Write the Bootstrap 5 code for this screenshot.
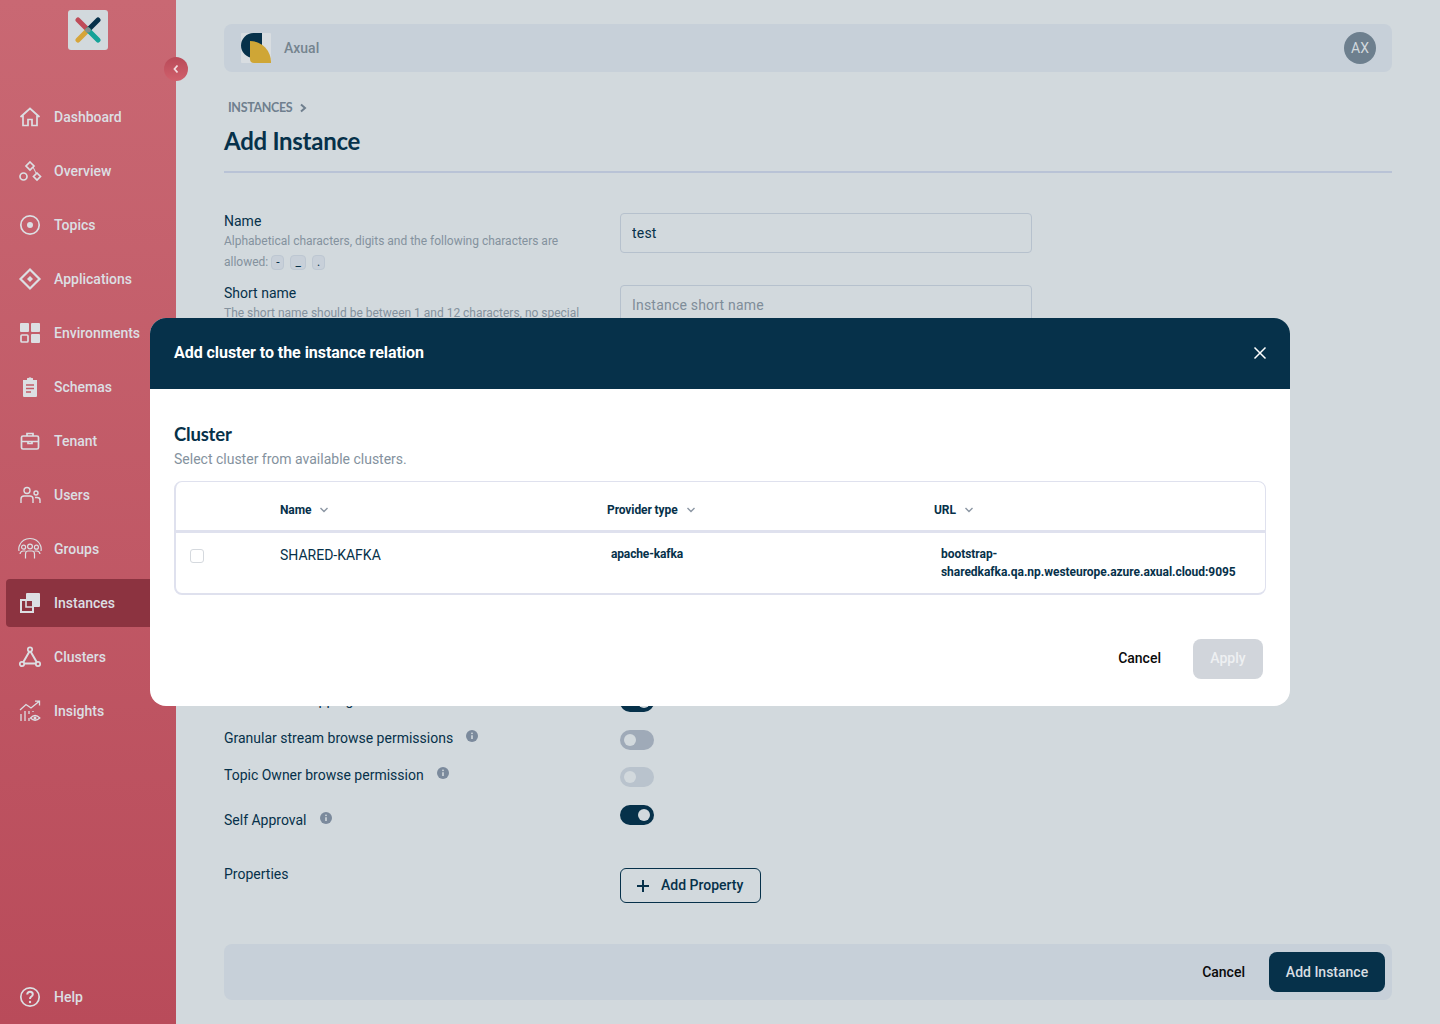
<!DOCTYPE html>
<html lang="en">
<head>
  <meta charset="UTF-8">
  <meta name="viewport" content="width=device-width, initial-scale=1.0">
  <title>Add Instance</title>
  <link href="https://cdn.jsdelivr.net/npm/bootstrap@5.3.0/dist/css/bootstrap.min.css" rel="stylesheet">
  <style>
    html, body { height: 1024px; overflow: hidden; }
    body { background: #d2d9dd; font-family: Roboto, "Liberation Sans", sans-serif; color: #06314a; }
    .app-shell { height: 1024px; position: relative; overflow: hidden; }

    /* sidebar */
    .side-bar { width: 176px; height: 1024px; flex: none; position: relative; background: linear-gradient(180deg, #c96873 0%, #b94b5a 100%); padding-top: 10px; }
    .logo-box { width: 40px; height: 40px; background: #d2d9dd; border-radius: 3px; margin: 0 auto 43px 68px; }
    .collapse-btn { position: absolute; left: 164px; top: 57px; width: 24px; height: 24px; border-radius: 50%; background: linear-gradient(180deg, #b94a58, #d0606c); }
    .side-item { height: 48px; margin: 0 0 6px 6px; padding-left: 48px; color: #dcdfe3; font-size: 14px; font-weight: 500; position: relative; border-radius: 4px 0 0 4px; }
    .side-item svg { position: absolute; left: 12px; top: 12px; width: 24px; height: 24px; fill: none; stroke: #dcdfe3; stroke-width: 1.7; }
    .side-item.active-item { background: #8c3340; }
    .side-help { position: absolute; left: 0; right: 0; top: 973px; margin-bottom: 0; }

    /* main */
    .main-pane { flex: 1; padding: 24px 48px 0; min-width: 0; }
    .top-bar { height: 48px; background: #c7d0d9; border-radius: 8px; padding: 0 16px; }
    .org-logo { width: 32px; height: 32px; }
    .org-name { color: #75848f; font-size: 14px; font-weight: 500; margin-left: 12px; }
    .avatar { width: 32px; height: 32px; border-radius: 50%; background: #6d7f8e; color: #d2d9dd; font-size: 14px; font-weight: 400; }
    .crumb { font-family: Lato, sans-serif; font-size: 12.5px; font-weight: 700; color: #6f7f8e; margin: 27px 0 0 4px; height: 18px; line-height: 18px; letter-spacing: -.35px; }
    .crumb svg { margin-left: 6px; vertical-align: -1px; }
    .page-title { font-family: Lato, sans-serif; font-size: 24px; font-weight: 700; margin: 6px 0 0; line-height: 36px; height: 38px; letter-spacing: -.27px; color: #06314a; }
    .title-rule { height: 2px; background: #b9c3d6; margin: 10px 0 40px; }
    .form-line { display: flex; }
    .label-col { width: 396px; flex: none; padding-right: 28px; margin-top: -1px; }
    .field-label { font-size: 14px; line-height: 18px; color: #06314a; }
    .field-help { font-size: 12px; line-height: 21px; color: #84929e; margin-top: 1px; letter-spacing: -.01px; }
    .char-chip { display: inline-block; border: 1px solid #bdc7d2; background: #c8d0d9; border-radius: 4px; font-size: 12px; line-height: 13px; height: 15px; padding: 0 4px; margin: 0 6px 0 0; color: #06314a; vertical-align: 0; }
    .text-field { width: 412px; height: 40px; background: #d2d9dd; border: 1px solid #b6c1cd; border-radius: 4px; font-size: 14px; padding: 0 11px; color: #06314a; letter-spacing: .2px; }
    .text-field::placeholder { color: #7f8d99; opacity: 1; }
    .covered-block { height: 419px; padding-top: 12px; }
    .option-line { display: flex; font-size: 14px; height: 37px; }
    .option-first { height: 38px; }
    .option-self { height: 63px; }
    .option-self .label-col { padding-top: 7px; }
    .option-line .label-col { line-height: 18px; }
    .option-line .form-switch { padding: 0; margin: 0; min-height: 0; height: 20px; }
    .option-line .form-check-input { width: 34px; height: 20px; margin: 0; border: 0; float: none; display: block; background-color: #9faab8; background-size: 20px 20px; background-position: left center; background-image: url("data:image/svg+xml,%3csvg xmlns='http://www.w3.org/2000/svg' viewBox='-4 -4 8 8'%3e%3ccircle r='2.4' fill='%23d2d9dd'/%3e%3c/svg%3e"); opacity: 1; }
    .option-line .form-check-input:checked { background-color: #06314a; background-position: right center; }
    .option-line .form-check-input:disabled { background-color: #b9c3cd; opacity: 1; }
    .info-dot { display: inline-block; width: 12px; height: 12px; margin-left: 13px; vertical-align: 1px; }
    .prop-label { margin-top: -3px; }
    .add-prop { width: 141px; height: 35px; border: 1px solid #06314a; border-radius: 6px; background: transparent; color: #06314a; font-size: 14px; font-weight: 500; padding: 0 0 0 16px; }
    .plus-mark { margin-right: 12px; }
    .bottom-bar { height: 56px; background: #c7d0d9; border-radius: 8px; padding: 0 7px; margin-top: 41px; }
    .plain-btn { background: none; border: 0; padding: 0 0 2px; font-size: 14px; font-weight: 500; color: #0a0a0a; }
    .dark-btn { height: 40px; width: 116px; background: #06314a; color: #d8dee2; border: 0; border-radius: 8px; font-size: 14px; font-weight: 500; margin-left: 24px; padding: 0; }
    .bottom-bar .plain-btn { padding: 0; }

    /* dialog */
    .dialog-box { position: absolute; left: 150px; top: 318px; width: 1140px; height: 388px; background: #fff; border-radius: 16px; overflow: hidden; }
    .dialog-head { height: 71px; background: #06314a; color: #fff; padding: 0 22px 2px 24px; }
    .dialog-head h5 { font-family: Roboto, sans-serif; font-size: 16px; font-weight: 700; margin: 0; letter-spacing: -.05px; }
    .dialog-body { padding: 33px 24px 0; }
    .dialog-title { font-family: Lato, sans-serif; font-size: 18.5px; font-weight: 700; line-height: 24px; margin: 0; letter-spacing: -.2px; color: #06314a; }
    .dialog-sub { font-size: 14px; color: #84929e; line-height: 18px; margin: 4px 0 13px; }
    .cluster-box { border: 1px solid #dfe1ee; border-width: 1px 1px 2px 2px; border-radius: 8px; height: 114px; overflow: hidden; }
    .cluster-table { width: 1090px; table-layout: fixed; margin: 0; --bs-table-bg: transparent; color: #06314a; }
    .cluster-table th { height: 49px; border-bottom: 3px solid #dfe1ee; font-size: 12px; font-weight: 700; padding: 8px 0 0; vertical-align: middle; color: #06314a; letter-spacing: -.1px; }
    .cluster-table td { border: 0; padding: 0; vertical-align: top; font-size: 12px; font-weight: 700; line-height: 18px; color: #06314a; }
    .cluster-table .sort-mark { width: 10px; height: 6px; margin-left: 8px; vertical-align: 1px; }
    .cluster-table .name-cell { font-size: 14px; font-weight: 400; padding-top: 13px; }
    .cluster-table .type-cell { padding: 12px 0 0 4px; letter-spacing: -.15px; }
    .cluster-table .url-cell { padding: 12px 0 0 7px; letter-spacing: -.04px; }
    .pick-box { display: block; width: 14px; height: 14px; border: 1px solid #d5d9de; border-radius: 3px; margin: 16px 0 0 14px; }
    .dialog-foot { margin: 44px 3px 0 0; }
    .dialog-foot .plain-btn { margin-right: 1px; }
    .apply-btn { width: 70px; height: 40px; background: #d1d5db; color: #eef0f2; border: 0; border-radius: 8px; font-size: 14px; font-weight: 500; margin-left: 31px; padding: 0 0 2px; }
  </style>
</head>
<body>

<div class="app-shell d-flex">

  <!-- Sidebar -->
  <aside class="side-bar">
    <div class="logo-box d-flex align-items-center justify-content-center">
      <svg width="26" height="26" viewBox="0 0 26 26" fill="none" stroke-width="5" stroke-linecap="round">
        <path d="M3 3 L13 13" stroke="#bf4c59"/>
        <path d="M23 3 L13 13" stroke="#06314a"/>
        <path d="M3 23 L13 13" stroke="#d6a53a"/>
        <path d="M23 23 L13 13" stroke="#15a398"/>
        <circle cx="13" cy="13" r="2.6" fill="#84908f"/>
      </svg>
    </div>
    <div class="collapse-btn d-flex align-items-center justify-content-center">
      <svg width="8" height="10" viewBox="0 0 8 10" fill="none" stroke="#f2dde0" stroke-width="1.8"><path d="M5.5 1.5 L2.5 5 L5.5 8.5"/></svg>
    </div>

    <div class="side-item d-flex align-items-center"><svg viewBox="0 0 24 24"><path d="M2.5 12 L12 3.5 L21.5 12 M5 10.5 V20.5 H10 V14.5 H14 V20.5 H19 V10.5"/></svg>Dashboard</div>
    <div class="side-item d-flex align-items-center"><svg viewBox="0 0 24 24"><path d="M12 3 L16 7 L12 11 L8 7 Z M19 14 L22.5 17.5 L19 21 L15.5 17.5 Z"/><circle cx="5.5" cy="17.5" r="3.5"/><path d="M15 8 L18 14" stroke-width="1"/></svg>Overview</div>
    <div class="side-item d-flex align-items-center"><svg viewBox="0 0 24 24"><circle cx="12" cy="12" r="9.2"/><circle cx="12" cy="12" r="3" fill="#dcdfe3" stroke="none"/></svg>Topics</div>
    <div class="side-item d-flex align-items-center"><svg viewBox="0 0 24 24"><path stroke-width="2.2" d="M12 2.5 L21.5 12 L12 21.5 L2.5 12 Z"/><path d="M12 9 L15 12 L12 15 L9 12 Z" fill="#dcdfe3" stroke="none"/></svg>Applications</div>
    <div class="side-item d-flex align-items-center"><svg viewBox="0 0 24 24"><rect x="2" y="2" width="9" height="9" rx="1" fill="#dcdfe3" stroke="none"/><rect x="13" y="2" width="9" height="9" rx="1" fill="#dcdfe3" stroke="none"/><rect x="3" y="14" width="7" height="7" rx="1"/><rect x="13" y="13" width="9" height="9" rx="1" fill="#dcdfe3" stroke="none"/></svg>Environments</div>
    <div class="side-item d-flex align-items-center"><svg viewBox="0 0 24 24"><path fill="#dcdfe3" stroke="none" d="M5 5 H9 V3.5 Q9 3 9.5 3 H10.5 Q12 1.5 13.5 3 H14.5 Q15 3 15 3.5 V5 H19 V21 Q19 22 18 22 H6 Q5 22 5 21 Z"/><path stroke="#c25c68" stroke-width="1.5" d="M8 10 H16 M8 13.5 H16 M8 17 H13"/></svg>Schemas</div>
    <div class="side-item d-flex align-items-center"><svg viewBox="0 0 24 24"><rect x="3.5" y="7" width="17" height="13" rx="1.5"/><path d="M9 7 V4.5 H15 V7 M3.5 12.5 H20.5 M10 12.5 V14.5 H14 V12.5"/></svg>Tenant</div>
    <div class="side-item d-flex align-items-center"><svg viewBox="0 0 24 24"><g stroke-width="1.4"><circle cx="9" cy="7.5" r="3"/><path d="M3 20 V16 Q3 13 6 13 H12 Q15 13 15 16 V20"/><circle cx="18" cy="10" r="2"/><path d="M17 14.5 H19 Q22 14.5 22 17 V20"/></g></svg>Users</div>
    <div class="side-item d-flex align-items-center"><svg viewBox="0 0 24 24"><g stroke-width="1.2"><path d="M1 14 Q.4 11 1.5 8.5 Q4.5 1.5 12 1.5 Q19.5 1.5 22.5 8.5 Q23.6 11 23 14"/><circle cx="12" cy="9.5" r="2.4"/><circle cx="5.6" cy="10.2" r="2"/><circle cx="18.4" cy="10.2" r="2"/><path d="M7.5 21.5 V17 Q7.5 14 10 14 H14 Q16.5 14 16.5 17 V21.5 M2 17 Q2.5 14 5 14 H7.5 M22 17 Q21.5 14 19 14 H16.5"/></g></svg>Groups</div>
    <div class="side-item active-item d-flex align-items-center"><svg viewBox="0 0 24 24"><rect x="8" y="2" width="14" height="14" rx="1" fill="#dcdfe3" stroke="none"/><rect x="3" y="9" width="12" height="12" fill="#8c3340" stroke-width="2"/><path d="M8 9 V16 H15" stroke-width="1.6"/></svg>Instances</div>
    <div class="side-item d-flex align-items-center"><svg viewBox="0 0 24 24"><path d="M12 5.5 L4.5 18.5 H19.5 Z" stroke-width="2"/><circle cx="12" cy="4.5" r="2.2" fill="#c05866"/><circle cx="4" cy="19" r="2.2" fill="#c05866"/><circle cx="20" cy="19" r="2.2" fill="#c05866"/></svg>Clusters</div>
    <div class="side-item d-flex align-items-center"><svg viewBox="0 0 24 24"><g stroke-width="1.3"><path d="M2 11 L8 5.5 L13 9 L21 2.5 M17 2.2 H21.5 V6.5"/><path d="M3 22 V15 M7 22 V12 M11 22 V19 M11 12 V15 M15 12 V13"/><path d="M12.5 19 Q17 14 21.8 19 Q17 23.5 12.5 19 Z"/></g><circle cx="17" cy="19" r="1.5" fill="#dcdfe3" stroke="none"/></svg>Insights</div>

    <div class="side-item side-help d-flex align-items-center"><svg viewBox="0 0 24 24"><circle cx="12" cy="12" r="9.2"/><path d="M9.2 9.5 Q9.5 6.8 12 6.8 Q14.8 6.8 14.8 9.3 Q14.8 11 13 11.8 Q12 12.4 12 14" stroke-width="2"/><circle cx="12" cy="17" r="1.2" fill="#dcdfe3" stroke="none"/></svg>Help</div>
  </aside>

  <!-- Main page under the dialog -->
  <main class="main-pane">
    <div class="top-bar d-flex align-items-center">
      <svg class="org-logo" viewBox="0 0 32 32">
        <rect x="1" y="1" width="30" height="30" rx="1" fill="#d8dde1"/>
        <path d="M1 13.5 A12.5 12.5 0 0 1 13.5 1 H22 V26 H13.5 A12.5 12.5 0 0 1 1 13.5 Z" fill="#06314a"/>
        <path d="M10 9 A21 21 0 0 1 31 31 H14 Q10 31 10 27 Z" fill="#cfa636"/>
      </svg>
      <span class="org-name">Axual</span>
      <span class="avatar ms-auto d-flex align-items-center justify-content-center">AX</span>
    </div>

    <div class="crumb">INSTANCES<svg width="10" height="10" viewBox="0 0 8 10" fill="none" stroke="#6f7f8e" stroke-width="2"><path d="M2 1.5 L6 5 L2 8.5"/></svg></div>
    <h1 class="page-title">Add Instance</h1>
    <div class="title-rule"></div>

    <div class="form-line">
      <div class="label-col">
        <div class="field-label">Name</div>
        <div class="field-help"><span>Alphabetical characters, digits and the following characters are</span> <span>allowed:</span> <span class="char-chip">-</span><span class="char-chip">_</span><span class="char-chip">.</span></div>
      </div>
      <input class="text-field" type="text" value="test">
    </div>

    <div class="covered-block">
      <div class="form-line">
        <div class="label-col">
          <div class="field-label">Short name</div>
          <div class="field-help">The short name should be between 1 and 12 characters, no special</div>
        </div>
        <input class="text-field" type="text" placeholder="Instance short name">
      </div>
    </div>

    <div class="option-line option-first">
      <div class="label-col">Enable ACL mapping</div>
      <div class="form-switch"><input class="form-check-input" type="checkbox" checked></div>
    </div>
    <div class="option-line">
      <div class="label-col">Granular stream browse permissions<svg class="info-dot" viewBox="0 0 12 12"><circle cx="6" cy="6" r="6" fill="#7b8a9c"/><path d="M6 5.3 V9" stroke="#d2d9dd" stroke-width="1.6"/><circle cx="6" cy="3.3" r=".9" fill="#d2d9dd"/></svg></div>
      <div class="form-switch"><input class="form-check-input" type="checkbox"></div>
    </div>
    <div class="option-line option-first">
      <div class="label-col">Topic Owner browse permission<svg class="info-dot" viewBox="0 0 12 12"><circle cx="6" cy="6" r="6" fill="#7b8a9c"/><path d="M6 5.3 V9" stroke="#d2d9dd" stroke-width="1.6"/><circle cx="6" cy="3.3" r=".9" fill="#d2d9dd"/></svg></div>
      <div class="form-switch"><input class="form-check-input" type="checkbox" disabled></div>
    </div>
    <div class="option-line option-self">
      <div class="label-col">Self Approval<svg class="info-dot" viewBox="0 0 12 12"><circle cx="6" cy="6" r="6" fill="#7b8a9c"/><path d="M6 5.3 V9" stroke="#d2d9dd" stroke-width="1.6"/><circle cx="6" cy="3.3" r=".9" fill="#d2d9dd"/></svg></div>
      <div class="form-switch"><input class="form-check-input" type="checkbox" checked></div>
    </div>
    <div class="form-line">
      <div class="label-col field-label prop-label">Properties</div>
      <button class="add-prop d-flex align-items-center" type="button">
        <svg width="12" height="12" viewBox="0 0 12 12" stroke="#06314a" stroke-width="2" class="plus-mark"><path d="M6 0 V12 M0 6 H12"/></svg>Add Property
      </button>
    </div>

    <div class="bottom-bar d-flex align-items-center justify-content-end">
      <button class="plain-btn" type="button">Cancel</button>
      <button class="dark-btn" type="button">Add Instance</button>
    </div>
  </main>

  <!-- Dialog -->
  <div class="dialog-box">
    <div class="dialog-head d-flex align-items-center justify-content-between">
      <h5>Add cluster to the instance relation</h5>
      <svg width="16" height="16" viewBox="0 0 16 16" stroke="#fff" stroke-width="1.5"><path d="M2.5 2.5 L13.5 13.5 M13.5 2.5 L2.5 13.5"/></svg>
    </div>
    <div class="dialog-body">
      <h4 class="dialog-title">Cluster</h4>
      <p class="dialog-sub">Select cluster from available clusters.</p>
      <div class="cluster-box">
        <table class="table cluster-table">
          <colgroup><col style="width:104px"><col style="width:327px"><col style="width:327px"><col></colgroup>
          <thead>
            <tr>
              <th></th>
              <th>Name<svg class="sort-mark" viewBox="0 0 10 6" fill="none" stroke="#8b96a3" stroke-width="1.4"><path d="M1.5 1 L5 4.5 L8.5 1"/></svg></th>
              <th>Provider type<svg class="sort-mark" viewBox="0 0 10 6" fill="none" stroke="#8b96a3" stroke-width="1.4"><path d="M1.5 1 L5 4.5 L8.5 1"/></svg></th>
              <th>URL<svg class="sort-mark" viewBox="0 0 10 6" fill="none" stroke="#8b96a3" stroke-width="1.4"><path d="M1.5 1 L5 4.5 L8.5 1"/></svg></th>
            </tr>
          </thead>
          <tbody>
            <tr>
              <td><span class="pick-box"></span></td>
              <td class="name-cell">SHARED-KAFKA</td>
              <td class="type-cell">apache-kafka</td>
              <td class="url-cell">bootstrap-<br>sharedkafka.qa.np.westeurope.azure.axual.cloud:9095</td>
            </tr>
          </tbody>
        </table>
      </div>
      <div class="dialog-foot d-flex align-items-center justify-content-end">
        <button class="plain-btn" type="button">Cancel</button>
        <button class="apply-btn" type="button" disabled>Apply</button>
      </div>
    </div>
  </div>

</div>

<script src="https://cdn.jsdelivr.net/npm/bootstrap@5.3.0/dist/js/bootstrap.bundle.min.js"></script>
</body>
</html>
